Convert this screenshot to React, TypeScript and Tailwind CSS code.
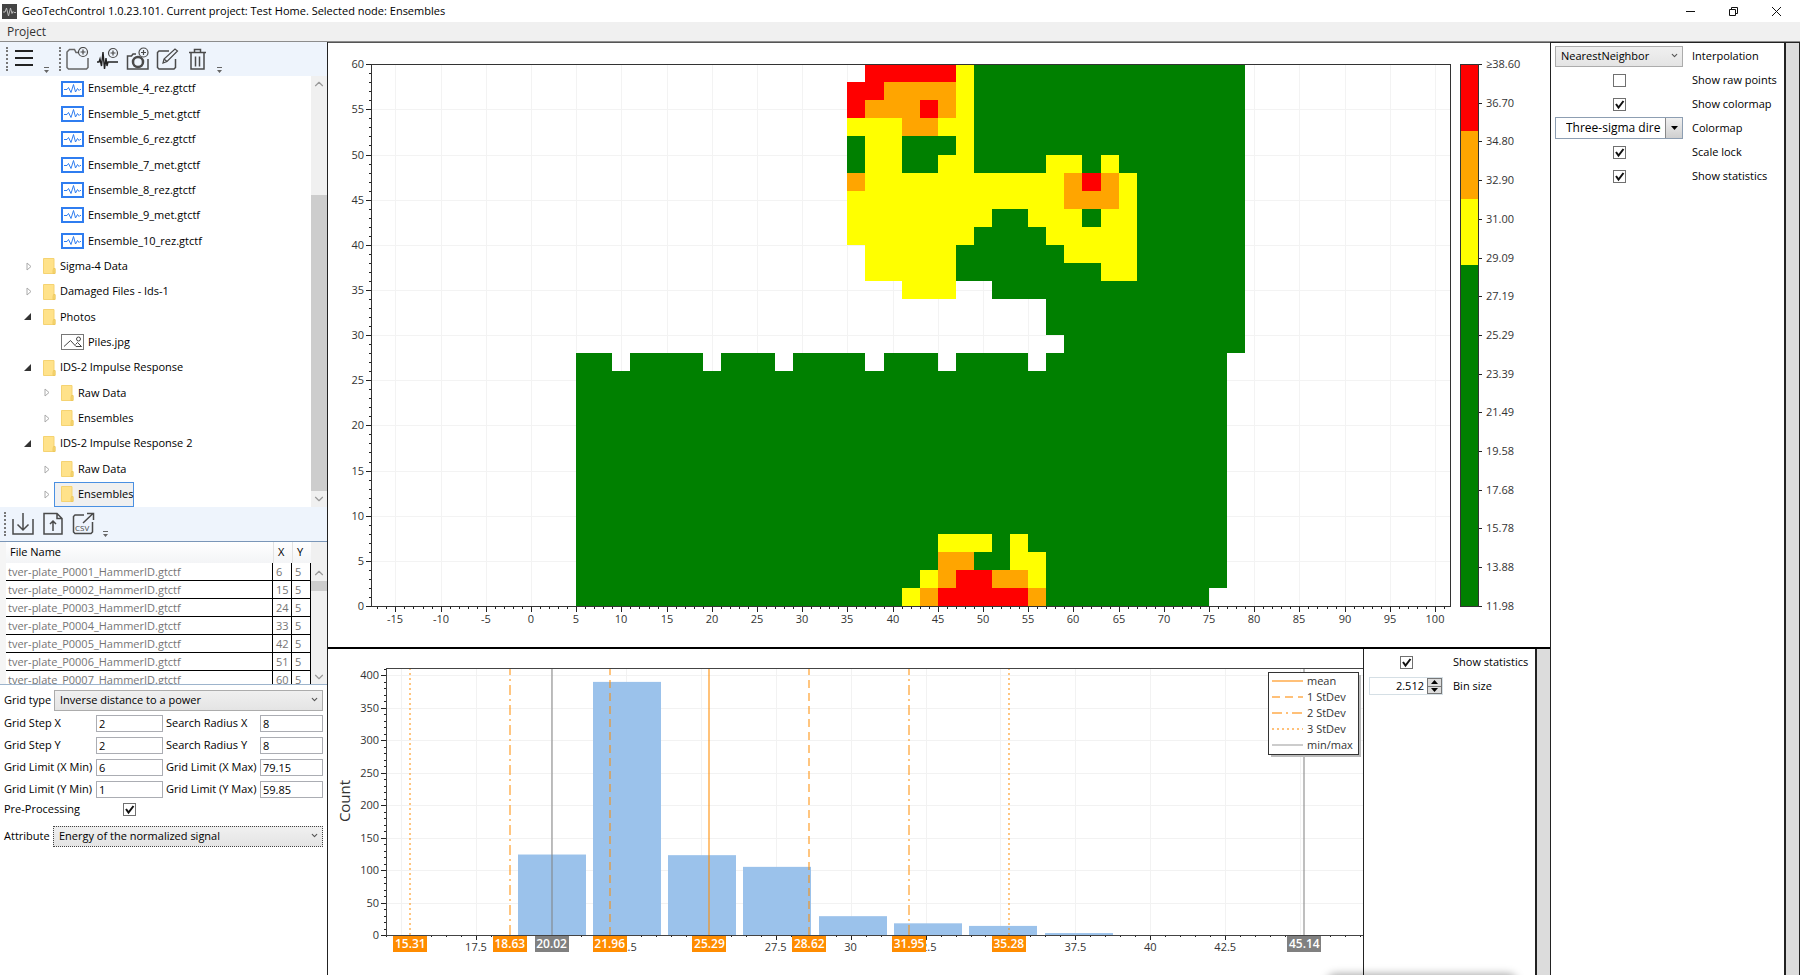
import { ReactNode } from "react"
import { ChevronDown, ChevronUp } from "lucide-react"

type TreeItem = {
  label: string
  icon: "wave" | "folder" | "image"
  depth: 0 | 1
  state?: "open" | "closed"
  selected?: boolean
}

const tree: TreeItem[] = [
  { label: "Ensemble_4_rez.gtctf", icon: "wave", depth: 1 },
  { label: "Ensemble_5_met.gtctf", icon: "wave", depth: 1 },
  { label: "Ensemble_6_rez.gtctf", icon: "wave", depth: 1 },
  { label: "Ensemble_7_met.gtctf", icon: "wave", depth: 1 },
  { label: "Ensemble_8_rez.gtctf", icon: "wave", depth: 1 },
  { label: "Ensemble_9_met.gtctf", icon: "wave", depth: 1 },
  { label: "Ensemble_10_rez.gtctf", icon: "wave", depth: 1 },
  { label: "Sigma-4 Data", icon: "folder", depth: 0, state: "closed" },
  { label: "Damaged Files - Ids-1", icon: "folder", depth: 0, state: "closed" },
  { label: "Photos", icon: "folder", depth: 0, state: "open" },
  { label: "Piles.jpg", icon: "image", depth: 1 },
  { label: "IDS-2 Impulse Response", icon: "folder", depth: 0, state: "open" },
  { label: "Raw Data", icon: "folder", depth: 1, state: "closed" },
  { label: "Ensembles", icon: "folder", depth: 1, state: "closed" },
  { label: "IDS-2 Impulse Response 2", icon: "folder", depth: 0, state: "open" },
  { label: "Raw Data", icon: "folder", depth: 1, state: "closed" },
  { label: "Ensembles", icon: "folder", depth: 1, state: "closed", selected: true },
]

const files = [6, 15, 24, 33, 42, 51, 60].map((x, i) => ({
  name: `tver-plate_P000${i + 1}_HammerID.gtctf`,
  x,
  y: 5,
}))

const G = "#008000"
const Y = "#ffff00"
const O = "#ffa500"
const R = "#ff0000"

// [y low, y high, x low, x high, color]; later entries paint over earlier ones
const cells: [number, number, number, number, string][] = [
  // base area
  [28, 60, 59, 79, G],
  [30, 34, 57, 59, G],
  [34, 36, 51, 59, G],
  [36, 42, 47, 59, G],
  [42, 44, 51, 55, G],
  [48, 60, 49, 59, G],
  [26, 28, 5, 9, G],
  [26, 28, 11, 19, G],
  [26, 28, 21, 27, G],
  [26, 28, 29, 37, G],
  [26, 28, 39, 45, G],
  [26, 28, 47, 55, G],
  [26, 28, 57, 77, G],
  [2, 26, 5, 77, G],
  [0, 2, 5, 75, G],
  // upper anomaly
  [58, 60, 37, 47, R],
  [48, 60, 47, 49, Y],
  [54, 58, 35, 47, O],
  [56, 58, 35, 39, R],
  [54, 56, 35, 37, R],
  [54, 56, 43, 45, R],
  [48, 54, 35, 47, Y],
  [52, 54, 41, 45, O],
  [48, 52, 35, 37, G],
  [50, 52, 41, 47, G],
  [48, 50, 41, 45, G],
  [48, 50, 57, 65, Y],
  [48, 50, 61, 63, G],
  [44, 48, 35, 67, Y],
  [46, 48, 35, 37, O],
  [44, 48, 59, 65, O],
  [46, 48, 61, 63, R],
  [42, 44, 35, 51, Y],
  [42, 44, 55, 67, Y],
  [42, 44, 61, 63, G],
  [40, 42, 35, 49, Y],
  [40, 42, 57, 67, Y],
  [36, 40, 37, 47, Y],
  [38, 40, 59, 67, Y],
  [36, 38, 63, 67, Y],
  [34, 36, 41, 47, Y],
  // lower anomaly
  [6, 8, 45, 51, Y],
  [6, 8, 53, 55, Y],
  [4, 6, 45, 49, O],
  [4, 6, 53, 57, Y],
  [2, 4, 43, 45, Y],
  [2, 4, 45, 47, O],
  [2, 4, 47, 51, R],
  [2, 4, 51, 55, O],
  [2, 4, 55, 57, Y],
  [0, 2, 41, 43, Y],
  [0, 2, 43, 45, O],
  [0, 2, 45, 55, R],
  [0, 2, 55, 57, O],
]

const scaleLabels = [
  "≥38.60", "36.70", "34.80", "32.90", "31.00", "29.09", "27.19", "25.29",
  "23.39", "21.49", "19.58", "17.68", "15.78", "13.88", "11.98",
]

function range(from: number, to: number, step: number) {
  const out: number[] = []
  for (let v = from; v <= to; v += step) out.push(v)
  return out
}

function HeatMap() {
  const sx = (v: number) => Math.round(203 + v * 9.04)
  const sy = (v: number) => Math.round(563 - v * 9.03)
  return (
    <svg viewBox="0 0 1222 604" className="block h-full w-full text-[11px]" fill="#333">
      <g stroke="#f3f3f3" strokeWidth="1">
        {range(-15, 100, 5).map((v) => (
          <line key={v} x1={sx(v) + 0.5} x2={sx(v) + 0.5} y1="21" y2="563" />
        ))}
        {range(5, 55, 5).map((v) => (
          <line key={v} x1="43" x2="1123" y1={sy(v) + 0.5} y2={sy(v) + 0.5} />
        ))}
      </g>
      <g shapeRendering="crispEdges">
        {cells.map(([y0, y1, x0, x1, c], i) => (
          <rect key={i} x={sx(x0)} y={sy(y1)} width={sx(x1) - sx(x0)} height={sy(y0) - sy(y1)} fill={c} />
        ))}
      </g>
      <rect x="43.5" y="21.5" width="1079" height="542" fill="none" stroke="#333" />
      <g stroke="#222">
        {range(-17, 101, 1).map((v) => (
          <line key={v} x1={sx(v) + 0.5} x2={sx(v) + 0.5} y1="564" y2={v % 5 === 0 ? 569 : 566} />
        ))}
        {range(0, 60, 1).map((v) => (
          <line key={v} y1={sy(v) + 0.5} y2={sy(v) + 0.5} x1={v % 5 === 0 ? 38 : 41} x2="43" />
        ))}
      </g>
      {range(-15, 100, 5).map((v) => (
        <text key={v} x={sx(v)} y="580" textAnchor="middle">{v}</text>
      ))}
      {range(0, 60, 5).map((v) => (
        <text key={v} x="36" y={sy(v) + 4} textAnchor="end">{v}</text>
      ))}

      <g shapeRendering="crispEdges">
        <rect x="1132" y="21" width="19" height="67" fill={R} />
        <rect x="1132" y="88" width="19" height="68" fill={O} />
        <rect x="1132" y="156" width="19" height="66" fill={Y} />
        <rect x="1132" y="222" width="19" height="341" fill={G} />
      </g>
      <rect x="1132.5" y="21.5" width="18" height="542" fill="none" stroke="#333" />
      {scaleLabels.map((label, i) => {
        const y = Math.round(21 + i * 38.7)
        return (
          <g key={label}>
            <line x1="1151" x2="1154" y1={y + 0.5} y2={y + 0.5} stroke="#222" />
            <text x="1158" y={y + 4}>{label}</text>
          </g>
        )
      })}
    </svg>
  )
}

const bins = [124, 390, 123, 105, 29, 18, 14, 3]

const stats = [
  { value: 15.31, kind: "dot" },
  { value: 18.63, kind: "dashdot" },
  { value: 20.02, kind: "limit" },
  { value: 21.96, kind: "dash" },
  { value: 25.29, kind: "mean" },
  { value: 28.62, kind: "dash" },
  { value: 31.95, kind: "dashdot" },
  { value: 35.28, kind: "dot" },
  { value: 45.14, kind: "limit" },
]

// ticks whose label is not fully covered by a statistics badge
const countTicks = [17.5, 22.5, 27.5, 30, 32.5, 37.5, 40, 42.5]

const dashes: Record<string, string | undefined> = {
  dot: "2 3",
  dashdot: "10 4 2 4",
  dash: "8 5",
}

const legend = [
  { label: "mean", kind: "mean" },
  { label: "1 StDev", kind: "dash" },
  { label: "2 StDev", kind: "dashdot" },
  { label: "3 StDev", kind: "dot" },
  { label: "min/max", kind: "limit" },
]

function Histogram() {
  const sx = (v: number) => 148 + (v - 17.5) * 29.97
  const sy = (v: number) => 286 - v * 0.649
  return (
    <svg viewBox="0 0 1035 326" className="block h-full w-full text-[11px]" fill="#333">
      <g stroke="#f2f2f2">
        {range(15, 45, 2.5).map((v) => (
          <line key={v} x1={Math.round(sx(v)) + 0.5} x2={Math.round(sx(v)) + 0.5} y1="19" y2="286" />
        ))}
        {range(50, 400, 50).map((v) => (
          <line key={v} x1="58" x2="1035" y1={Math.round(sy(v)) + 0.5} y2={Math.round(sy(v)) + 0.5} />
        ))}
      </g>
      {bins.map((count, i) => (
        <rect
          key={i}
          x={Math.round(sx(20.02 + i * 2.512) - 34)}
          y={sy(count)}
          width="68"
          height={count * 0.649}
          fill="#9bc2eb"
        />
      ))}
      {stats.map(({ value, kind }) => (
        <line
          key={value}
          x1={Math.round(sx(value))}
          x2={Math.round(sx(value))}
          y1="286"
          y2="19"
          stroke={kind === "limit" ? "#808080" : "#ff8c00"}
          strokeOpacity={kind === "mean" ? 0.7 : 0.5}
          strokeWidth={kind === "mean" ? 1.5 : 2}
          strokeDasharray={dashes[kind]}
        />
      ))}
      <path d="M58.5 286V19.5M58 19.5H1035M58 286.5H1035" fill="none" stroke="#444" strokeWidth="1" />
      <g stroke="#222">
        {range(14.5, 47, 0.5).map((v) => (
          <line
            key={v}
            x1={Math.round(sx(v)) + 0.5}
            x2={Math.round(sx(v)) + 0.5}
            y1="287"
            y2={v % 2.5 === 0 ? 291 : 288}
          />
        ))}
        {range(0, 410, 10).map((v) => (
          <line
            key={v}
            y1={Math.round(sy(v)) + 0.5}
            y2={Math.round(sy(v)) + 0.5}
            x1={v % 50 === 0 ? 53 : 56}
            x2="58"
          />
        ))}
      </g>
      {countTicks.map((v) => (
        <text key={v} x={sx(v)} y="302" textAnchor="middle">{v}</text>
      ))}
      {range(0, 400, 50).map((v) => (
        <text key={v} x="51" y={sy(v) + 4} textAnchor="end">{v}</text>
      ))}
      <text transform="translate(22 152) rotate(-90)" textAnchor="middle" className="text-[15px]">
        Count
      </text>
      {stats.map(({ value, kind }) => (
        <g key={value}>
          <rect
            x={Math.round(sx(value)) - 17}
            y="287"
            width="34"
            height="16"
            fill={kind === "limit" ? "#808080" : "#ff8c00"}
          />
          <text x={sx(value)} y="299" textAnchor="middle" fill="#fff" className="text-[12px] font-semibold">
            {value.toFixed(2)}
          </text>
        </g>
      ))}
      <rect x="943" y="26" width="90" height="82" fill="#bbb" />
      <rect x="940.5" y="23.5" width="90" height="82" fill="#fff" stroke="#333" />
      {legend.map(({ label, kind }, i) => (
        <g key={label}>
          <line
            x1="944"
            x2="975"
            y1={32 + i * 16}
            y2={32 + i * 16}
            stroke={kind === "limit" ? "#999" : "#ffc078"}
            strokeWidth={kind === "limit" ? 1 : 2}
            strokeDasharray={dashes[kind]}
          />
          <text x="979" y={36 + i * 16}>{label}</text>
        </g>
      ))}
    </svg>
  )
}

function ToolButton({ label, children }: { label: string; children: ReactNode }) {
  return (
    <button aria-label={label} className="flex h-6 w-6 items-center justify-center text-[#4a4a4a]">
      <svg viewBox="0 0 24 24" className="h-6 w-6" fill="none" stroke="currentColor" strokeWidth="1.5">
        {children}
      </svg>
    </button>
  )
}

function Grip() {
  return <span className="h-6 w-0 border-l-2 border-dotted border-[#777]" />
}

function Overflow() {
  return (
    <svg viewBox="0 0 5 6" className="h-[6px] w-[5px] self-end" fill="#666">
      <path d="M0 0h5v1H0zM0 3h5L2.5 6z" />
    </svg>
  )
}

function Plus({ x, y }: { x: number; y: number }) {
  return (
    <g strokeWidth="1.2">
      <circle cx={x} cy={y} r="4.5" fill="#eef4fc" />
      <path d={`M${x - 2.5} ${y}h5M${x} ${y - 2.5}v5`} />
    </g>
  )
}

function ItemIcon({ icon }: { icon: TreeItem["icon"] }) {
  if (icon === "folder") {
    return (
      <svg viewBox="0 0 13 16" className="h-4 w-[13px] shrink-0">
        <path d="M0.500 0.500h10.500v10h1v5h-11.500z" fill="#ffe28a" stroke="#f5d372" />
        <path d="M10.500 10.500h1.500v5h-2v-3z" fill="#f7d774" stroke="#ecc75c" strokeWidth="0.800" />
      </svg>
    )
  }
  if (icon === "image") {
    return (
      <svg viewBox="0 0 23 16" className="h-4 w-[23px] shrink-0" fill="none" stroke="#777">
        <rect x="0.500" y="0.500" width="22" height="15" />
        <path d="M3 12.500l6.500-6 5.500 6h5.500l-4-4-2 2" stroke="#444" />
        <circle cx="17.500" cy="5" r="2" stroke="#444" />
      </svg>
    )
  }
  return (
    <svg viewBox="0 0 23 16" className="h-4 w-[23px] shrink-0" fill="#fff" stroke="#2f7df0">
      <rect x="1" y="1" width="21" height="14" strokeWidth="2" />
      <path d="M3 8.500h3l1.500-2 2.500 5 2.500-8 2 7.500 2-3.500 1.500 2 1-1h1" fill="none" strokeWidth="1" />
    </svg>
  )
}

function Tree() {
  return (
    <div className="flex h-[431px] shrink-0">
      <ul className="flex min-w-0 flex-1 flex-col">
        {tree.map((item, i) => (
          <li key={i} className={`flex flex-1 items-center ${item.depth ? "pl-[42px]" : "pl-6"}`}>
            <span className="flex w-3 shrink-0">
              {item.state === "open" && (
                <svg viewBox="0 0 7 7" className="h-[7px] w-[7px]"><path d="M7 0v7H0z" fill="#333" /></svg>
              )}
              {item.state === "closed" && (
                <svg viewBox="0 0 6 9" className="ml-[2px] h-[9px] w-[6px]" fill="#fff" stroke="#aaa">
                  <path d="M1 1v7l4-3.500z" />
                </svg>
              )}
            </span>
            <span
              className={
                item.selected
                  ? "flex h-full items-center gap-1 border border-[#4a90e2] bg-[#f0f0f0] pl-[6px]"
                  : "flex items-center gap-1 pl-[7px]"
              }
            >
              <ItemIcon icon={item.icon} />
              <span className="whitespace-nowrap">{item.label}</span>
            </span>
          </li>
        ))}
      </ul>
      <div className="flex w-4 flex-col items-center justify-between bg-[#f0f0f0] text-[#999]">
        <ChevronUp className="mt-px h-[14px] w-[14px]" />
        <div className="mt-[104px] w-full flex-1 bg-[#cdcdcd]" />
        <ChevronDown className="h-4 w-[14px]" />
      </div>
    </div>
  )
}

function FileTable() {
  return (
    <div className="flex h-[143px] shrink-0 overflow-hidden border-b border-[#9db4cc]">
      <div className="w-[6px] bg-[#f5f5f5]" />
      <div className="min-w-0 flex-1 overflow-hidden">
        <table className="w-full table-fixed border-separate border-spacing-0">
          <thead>
            <tr className="h-[21px] bg-gradient-to-b from-white to-[#f3f4f6] text-left">
              <th className="pl-1 font-normal">File Name</th>
              <th className="w-[19px] border-l border-[#e3e3e3] pl-1 font-normal">X</th>
              <th className="w-[19px] border-l border-[#e3e3e3] pl-1 font-normal">Y</th>
            </tr>
          </thead>
          <tbody className="text-[#757575]">
            {files.map((f) => (
              <tr key={f.name} className="h-[18px] leading-4">
                <td className="border-r border-b border-black p-0 pl-[2px]">{f.name}</td>
                <td className="border-r border-b border-black p-0 pl-[3px]">{f.x}</td>
                <td className="border-r border-b border-black p-0 pl-[3px]">{f.y}</td>
              </tr>
            ))}
          </tbody>
        </table>
      </div>
      <div className="flex w-4 flex-col items-center bg-[#f0f0f0] pt-6 text-[#999]">
        <ChevronUp className="h-[14px] w-[14px]" />
        <div className="mt-px h-[10px] w-full bg-[#cdcdcd]" />
        <ChevronDown className="mt-auto h-[14px] w-[14px]" />
      </div>
    </div>
  )
}

function Dropdown({ id, value, focused }: { id: string; value: string; focused?: boolean }) {
  return (
    <div className="relative min-w-0 flex-1">
      <select
        id={id}
        className={`block h-[21px] w-full appearance-none border bg-gradient-to-b from-[#f0f0f0] to-[#e4e4e4] pl-[5px] ${
          focused ? "border-dotted border-[#444]" : "border-[#acacac]"
        }`}
      >
        <option>{value}</option>
      </select>
      <ChevronDown className="pointer-events-none absolute top-[5px] right-1 h-[9px] w-[9px] stroke-3 text-[#555]" />
    </div>
  )
}

function Check({ id, checked }: { id: string; checked?: boolean }) {
  return (
    <span className="relative block h-[13px] w-[13px]">
      <input
        id={id}
        type="checkbox"
        defaultChecked={checked}
        className="peer block h-[13px] w-[13px] appearance-none border border-[#707070] bg-white"
      />
      <svg
        viewBox="0 0 13 13"
        className="pointer-events-none absolute inset-0 hidden peer-checked:block"
        fill="none"
        stroke="#111"
        strokeWidth="2"
      >
        <path d="M3 6l2.500 3.500L10.500 3" />
      </svg>
    </span>
  )
}

const fields = [
  ["Grid Step X", "2", "Search Radius X", "8"],
  ["Grid Step Y", "2", "Search Radius Y", "8"],
  ["Grid Limit (X Min)", "6", "Grid Limit (X Max)", "79.15"],
  ["Grid Limit (Y Min)", "1", "Grid Limit (Y Max)", "59.85"],
]

function Field({ label, value }: { label: string; value: string }) {
  return (
    <>
      <label htmlFor={label} className="whitespace-nowrap">{label}</label>
      <input
        id={label}
        defaultValue={value}
        className="h-[17px] w-full min-w-0 border border-[#abadb3] bg-white px-[2px]"
      />
    </>
  )
}

function FieldPair({ a, av, b, bv }: { a: string; av: string; b: string; bv: string }) {
  return (
    <>
      <Field label={a} value={av} />
      <Field label={b} value={bv} />
    </>
  )
}

function GridForm() {
  return (
    <form className="flex flex-col pt-[5px] pr-1 pl-1">
      <div className="flex items-center gap-1">
        <label htmlFor="grid-type" className="w-[46px] whitespace-nowrap">Grid type</label>
        <Dropdown id="grid-type" value="Inverse distance to a power" />
      </div>
      <div className="mt-1 grid grid-cols-[91px_67px_95px_minmax(0,1fr)] items-center gap-x-px gap-y-[5px] [&>label:nth-of-type(even)]:pl-[2px]">
        {fields.map(([a, av, b, bv]) => (
          <FieldPair key={a} a={a} av={av} b={b} bv={bv} />
        ))}
      </div>
      <div className="mt-px flex h-5 items-center">
        <label htmlFor="pre" className="w-[119px]">Pre-Processing</label>
        <Check id="pre" checked />
      </div>
      <div className="mt-[7px] flex items-center gap-1">
        <label htmlFor="attribute" className="w-[45px]">Attribute</label>
        <Dropdown id="attribute" value="Energy of the normalized signal" focused />
      </div>
    </form>
  )
}

function Sidebar() {
  return (
    <aside className="flex w-[328px] shrink-0 flex-col border-r border-[#222]">
      <div className="flex h-[34px] shrink-0 items-center bg-[#eef4fc] pl-[6px]">
        <Grip />
        <span className="ml-1">
          <ToolButton label="Menu">
            <path d="M3 4h18M3 11h18M3 18h18" strokeWidth="2" stroke="#222" />
          </ToolButton>
        </span>
        <span className="ml-[8px] flex h-[28px]"><Overflow /></span>
        <span className="ml-[10px] flex"><Grip /></span>
        <div className="ml-[5px] flex gap-[6px]">
          <ToolButton label="Add folder">
            <path d="M12 5.500h-2L8.500 2.500h-5L1 5v15.500L2.500 22h18l1.500-1.500V11" stroke="#666" />
            <Plus x={17} y={5} />
          </ToolButton>
          <ToolButton label="Add signal">
            <path d="M1 15h2l1-3 1.500 7L7 5l1.500 17L10 11l1 8 1-4h10" strokeWidth="1.400" stroke="#222" />
            <Plus x={17} y={6} />
          </ToolButton>
          <ToolButton label="Add photo">
            <path d="M10 7H7L5.500 9H1.500v13h20.500V12" />
            <circle cx="12" cy="15" r="5" strokeWidth="2.500" />
            <Plus x={17.5} y={5.5} />
          </ToolButton>
          <ToolButton label="Edit">
            <path d="M13 4H3L1.500 5.500V20.500L3 22H18l1.500-1.500V12" />
            <path d="M7 16l1-4L19 2l2.500 2L11 14.500zM8 12l3 2.500" strokeWidth="1.200" />
          </ToolButton>
          <ToolButton label="Delete">
            <path d="M3 5.500h17M8.500 5V2.500h6V5M5 6v16h13V6M9.500 9.500v10M13.500 9.500v10" />
          </ToolButton>
        </div>
        <span className="ml-[7px] flex h-[28px]"><Overflow /></span>
      </div>
      <Tree />
      <div className="flex h-[35px] shrink-0 items-center border-b border-[#7a96b8] bg-[#eef4fc] pl-1">
        <Grip />
        <div className="ml-[5px] flex gap-[6px]">
          <ToolButton label="Import">
            <path d="M2 7v15h20V7M12 1v17M6.500 12.500L12 18l5.500-5.500" />
          </ToolButton>
          <ToolButton label="Export file">
            <path d="M3 1.500h13l5 5V22H3zM16 1.500v5h5M12 19V9M9 12l3-3 3 3" />
          </ToolButton>
          <ToolButton label="Export CSV">
            <path d="M13 3H4L2.500 4.500V20L4 21.500h16l1.500-1.500V10M12 11L22 1.500M16 1.500h6.500V8" />
            <text x="4" y="19" fill="#444" stroke="none" fontSize="8">CSV</text>
          </ToolButton>
        </div>
        <span className="ml-[8px] flex h-[26px]"><Overflow /></span>
      </div>
      <FileTable />
      <GridForm />
    </aside>
  )
}

export default function App() {
  return (
    <div className='relative flex h-screen flex-col overflow-hidden bg-white font-["Open_Sans","Noto_Sans",sans-serif] text-[11px] text-black'>
      <header className="flex h-[22px] shrink-0 items-center gap-[5px] pl-[2px]">
        <svg viewBox="0 0 15 15" className="h-[15px] w-[15px]">
          <rect width="15" height="15" fill="#444" />
          <path d="M1 8h2l1.500-4 2 8 2-8L10 9.500l1-2 1 1h2" fill="none" stroke="#bbb" />
        </svg>
        <h1>GeoTechControl 1.0.23.101. Current project: Test Home. Selected node: Ensembles</h1>
        <div className="ml-auto flex gap-8 pr-[18px]">
          {["M1 5.500h9", "M1.500 3.500h6v6h-6zM3.500 3.500v-2h6v6h-2", "M1 1l9 9M10 1l-9 9"].map((d, i) => (
            <button key={d} aria-label={["Minimize", "Restore", "Close"][i]}>
              <svg viewBox="0 0 11 11" className="h-[11px] w-[11px]" fill="none" stroke="#111"><path d={d} /></svg>
            </button>
          ))}
        </div>
      </header>
      <nav className="flex h-[20px] shrink-0 items-center border-b border-[#8c8c8c] bg-[#f0f0f0] pl-[7px]">
        <button className="text-[12px] text-[#333]">Project</button>
      </nav>

      <div className="flex min-h-0 flex-1">
        <Sidebar />
        <main className="flex min-w-0 flex-1 flex-col border-t border-[#555]">
          <section className="min-h-0 flex-[604]">
            <HeatMap />
          </section>
          <section className="flex min-h-0 flex-[326] border-t-2 border-black">
            <div className="min-w-0 flex-1">
              <Histogram />
            </div>
            <div className="grid w-[172px] grid-cols-[74px_1fr] content-start items-center gap-x-[10px] border-l border-[#222] pt-px pl-[5px]">
              <span className="flex h-6 items-center justify-center"><Check id="hist-stats" checked /></span>
              <label htmlFor="hist-stats" className="whitespace-nowrap">Show statistics</label>
              <div className="flex h-[18px] border border-[#d5dfe5]">
                <input
                  id="bin-size"
                  defaultValue="2.512"
                  className="w-full min-w-0 bg-white pr-[3px] text-right"
                />
                <span className="flex w-[15px] shrink-0 flex-col border border-[#777] bg-[#dcdcdc]">
                  <button aria-label="Increase bin size" className="flex flex-1 items-center justify-center border-b border-[#777]">
                    <svg viewBox="0 0 7 4" className="h-1 w-[7px]"><path d="M0 4l3.500-4L7 4z" /></svg>
                  </button>
                  <button aria-label="Decrease bin size" className="flex flex-1 items-center justify-center">
                    <svg viewBox="0 0 7 4" className="h-1 w-[7px]"><path d="M0 0l3.500 4L7 0z" /></svg>
                  </button>
                </span>
              </div>
              <label htmlFor="bin-size" className="flex h-6 items-center">Bin size</label>
            </div>
            <div className="w-[15px] shrink-0 border-l-2 border-[#222] bg-[#dcdcdc]" />
          </section>
        </main>
        <aside className="flex w-[250px] shrink-0 border-t border-l border-[#222]">
          <div className="grid min-w-0 flex-1 grid-cols-[128px_1fr] content-start items-center gap-x-[9px] pt-px pl-1">
            <Dropdown id="interpolation" value="NearestNeighbor" />
            <label htmlFor="interpolation" className="flex h-6 items-center">Interpolation</label>
            <span className="flex h-6 items-center justify-center"><Check id="raw" /></span>
            <label htmlFor="raw" className="whitespace-nowrap">Show raw points</label>
            <span className="flex h-6 items-center justify-center"><Check id="colormap-on" checked /></span>
            <label htmlFor="colormap-on" className="whitespace-nowrap">Show colormap</label>
            <div className="relative h-[22px] border border-[#8d9eb2]">
              <select
                id="colormap"
                className="block h-5 w-[105px] appearance-none overflow-hidden bg-white pl-[10px] text-[12px]"
              >
                <option>Three-sigma direct</option>
              </select>
              <span className="pointer-events-none absolute inset-y-0 right-0 flex w-[17px] items-center justify-center border-l border-[#888] bg-gradient-to-b from-[#f0f0f0] to-[#cfcfcf]">
                <svg viewBox="0 0 7 4" className="h-1 w-[7px]"><path d="M0 0h7L3.500 4z" /></svg>
              </span>
            </div>
            <label htmlFor="colormap" className="flex h-6 items-center">Colormap</label>
            <span className="flex h-6 items-center justify-center"><Check id="lock" checked /></span>
            <label htmlFor="lock">Scale lock</label>
            <span className="flex h-6 items-center justify-center"><Check id="stats" checked /></span>
            <label htmlFor="stats" className="whitespace-nowrap">Show statistics</label>
          </div>
          <div className="w-4 shrink-0 border-x border-l-2 border-[#222] bg-[#dcdcdc]" />
        </aside>
      </div>

      {/* shadow of a popup just below the window edge */}
      <div className="pointer-events-none absolute -bottom-3 left-[74%] h-2 w-[180px] rounded-full shadow-[0_0_8px_5px_rgba(0,0,0,0.35)]" />
    </div>
  )
}
